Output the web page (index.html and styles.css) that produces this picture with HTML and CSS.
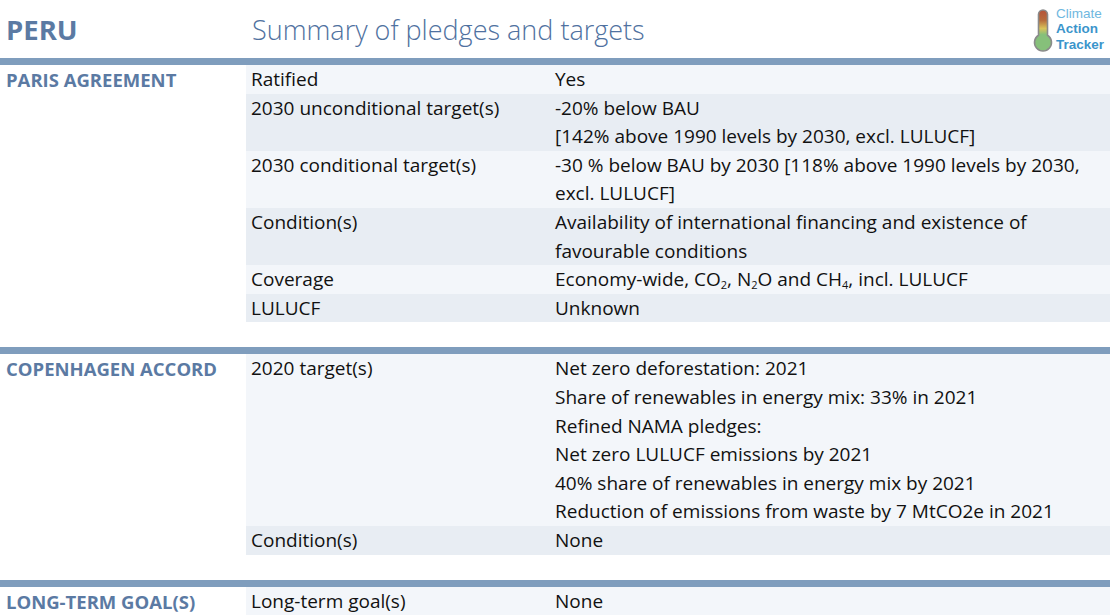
FILE: index.html
```html
<!DOCTYPE html>
<html lang="en">
<head>
<meta charset="utf-8">
<title>Peru – Summary of pledges and targets</title>
<link rel="stylesheet" href="styles.css">
</head>
<body>
<header class="header">
  <h1 class="country">PERU</h1>
  <h2 class="title">Summary of pledges and targets</h2>
  <div class="logo">
    <svg class="thermo" width="20" height="43" viewBox="0 0 20 43">
      <defs>
        <linearGradient id="tg" x1="0" y1="0" x2="0" y2="1">
          <stop offset="0" stop-color="#b5523a"/>
          <stop offset="0.25" stop-color="#b76c3c"/>
          <stop offset="0.45" stop-color="#d9c35a"/>
          <stop offset="0.6" stop-color="#86c07a"/>
          <stop offset="1" stop-color="#86c07a"/>
        </linearGradient>
      </defs>
      <path d="M5.5 5.5 a4.5 4.5 0 0 1 9 0 V26.3 a8.5 8.5 0 1 1 -9 0 Z" fill="url(#tg)" stroke="#8a8a8a" stroke-width="1.6"/>
    </svg>
    <div class="logo-text">
      <span class="l1">Climate</span>
      <span class="l2">Action</span>
      <span class="l2">Tracker</span>
    </div>
  </div>
</header>

<section class="section">
  <h3 class="sec-label">PARIS AGREEMENT</h3>
  <div class="rows">
    <div class="row light"><div class="key">Ratified</div><div class="val">Yes</div></div>
    <div class="row dark"><div class="key">2030 unconditional target(s)</div><div class="val">-20% below BAU<br>[142% above 1990 levels by 2030, excl. LULUCF]</div></div>
    <div class="row light"><div class="key">2030 conditional target(s)</div><div class="val">-30 % below BAU by 2030 [118% above 1990 levels by 2030, excl. LULUCF]</div></div>
    <div class="row dark"><div class="key">Condition(s)</div><div class="val">Availability of international financing and existence of favourable conditions</div></div>
    <div class="row light"><div class="key">Coverage</div><div class="val">Economy-wide, CO<sub>2</sub>, N<sub>2</sub>O and CH<sub>4</sub>, incl. LULUCF</div></div>
    <div class="row dark"><div class="key">LULUCF</div><div class="val">Unknown</div></div>
  </div>
</section>

<section class="section">
  <h3 class="sec-label">COPENHAGEN ACCORD</h3>
  <div class="rows">
    <div class="row light"><div class="key">2020 target(s)</div><div class="val">Net zero deforestation: 2021<br>Share of renewables in energy mix: 33% in 2021<br>Refined NAMA pledges:<br>Net zero LULUCF emissions by 2021<br>40% share of renewables in energy mix by 2021<br>Reduction of emissions from waste by 7 MtCO2e in 2021</div></div>
    <div class="row dark"><div class="key">Condition(s)</div><div class="val">None</div></div>
  </div>
</section>

<section class="section">
  <h3 class="sec-label">LONG-TERM GOAL(S)</h3>
  <div class="rows">
    <div class="row light"><div class="key">Long-term goal(s)</div><div class="val">None</div></div>
  </div>
</section>
</body>
</html>
```

FILE: styles.css
```css
* { box-sizing: border-box; }
html, body { margin: 0; padding: 0; }
body {
  width: 1110px;
  height: 616px;
  overflow: hidden;
  background: #ffffff;
  font-family: "Open Sans", "Liberation Sans", sans-serif;
  color: #111111;
}
.header {
  height: 58px;
  display: flex;
  align-items: center;
}
.country {
  margin: 0;
  width: 246px;
  padding-left: 6px;
  font-size: 27.5px;
  font-weight: 700;
  color: #5b7aa3;
}
.title {
  margin: 0;
  padding-left: 6px;
  font-family: "Open Sans", sans-serif;
  font-weight: 300;
  font-size: 27px;
  color: #4f71a0;
  flex: 1;
}
.logo {
  display: flex;
  align-items: center;
  gap: 3px;
  margin-right: 6px;
}
.thermo { display: block; margin-top: 2px; }
.logo-text {
  display: flex;
  flex-direction: column;
  font-family: "Liberation Sans", "Noto Sans", sans-serif;
  font-size: 13.5px;
  line-height: 15.5px;
}
.logo-text .l1 { color: #6fb8e0; font-weight: 400; }
.logo-text .l2 { color: #3b95cb; font-weight: 700; }

.section {
  display: flex;
  border-top: 7px solid #7f9dbd;
  margin-bottom: 25px;
}
.sec-label {
  margin: 0;
  width: 246px;
  flex: none;
  padding: 3px 0 0 6px;
  font-size: 18.5px;
  font-weight: 700;
  color: #5b7aa3;
  line-height: 24px;
}
.rows { flex: 1; display: flex; flex-direction: column; }
.row {
  display: flex;
  font-size: 19px;
  line-height: 28.6px;
}
.row.light { background: #f3f6fa; }
.row.dark { background: #e8edf3; }
.key { width: 304px; flex: none; padding-left: 5px; }
.val { flex: 1; padding-left: 5px; padding-right: 20px; }
sub { font-size: 11px; line-height: 0; vertical-align: -3px; }
```
